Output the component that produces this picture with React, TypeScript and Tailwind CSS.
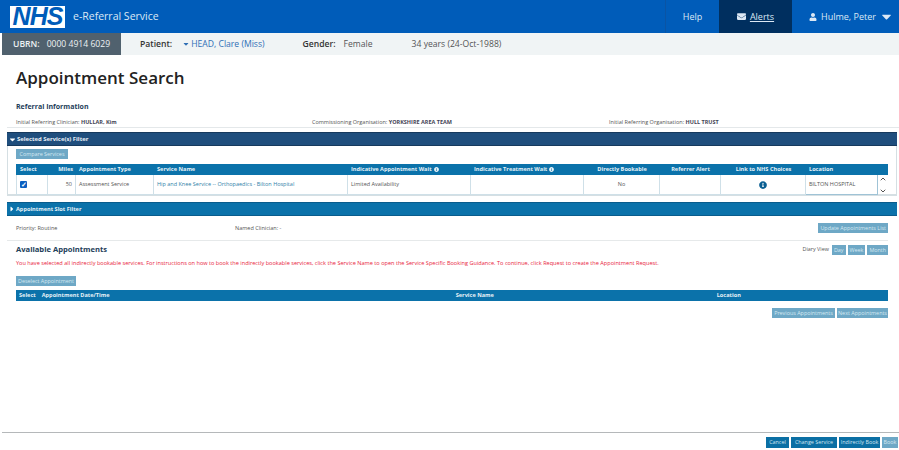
import React from 'react';
import { ChevronDown, ChevronUp } from 'lucide-react';
import { FaCaretDown, FaCaretRight, FaEnvelope, FaInfoCircle, FaUser } from 'react-icons/fa';

function Btn({ children, dark, tall, width = '' }: { children: React.ReactNode; dark?: boolean; tall?: boolean; width?: string }) {
  return (
    <button className={`block text-center text-[5.4px] whitespace-nowrap ${width || 'px-[2px]'} ${tall ? 'h-[11px] leading-[11px]' : 'h-[10px] leading-[10px]'} ${dark ? 'bg-[#0b6fa4] text-[#cfe5f1]' : 'bg-[#6ea8c6] text-[#d5e8f2]'}`}>
      {children}
    </button>
  );
}

const cols = 'grid-cols-[32px_28px_78px_194px_123px_113px_76px_61px_85px_82px]';

export default function App() {
  return (
    <div className="flex h-[450px] w-[899px] flex-col overflow-hidden bg-white font-['Open_Sans','Liberation_Sans',sans-serif] text-[#555]">
      {/* Header */}
      <div className="flex h-[33px] shrink-0 bg-[#005cb9] text-[#dce8f5]">
        <div className="flex items-center pl-[10px]">
          <div className="flex h-[22px] w-[55px] items-center justify-center bg-white">
            <span className="font-['Liberation_Sans',sans-serif] text-[25px] leading-none font-bold tracking-[-1px] text-[#005cb9] italic">NHS</span>
          </div>
          <span className="ml-[8px] text-[10.5px] font-medium">e-Referral Service</span>
        </div>
        <div className="ml-auto flex text-[9px]">
          <div className="flex w-[54px] items-center justify-center border-l border-[#0a54a4] font-medium">Help</div>
          <div className="flex w-[73px] items-center justify-center gap-[4px] bg-[#002f5f]">
            <FaEnvelope className="size-[9px]" />
            <span className="underline">Alerts</span>
          </div>
          <div className="flex w-[107px] items-center pl-[17px]">
            <FaUser className="size-[8px]" />
            <span className="ml-[4px]">Hulme, Peter</span>
            <FaCaretDown className="ml-[3px] size-[15px]" />
          </div>
        </div>
      </div>

      {/* Patient bar */}
      <div className="ml-[2px] flex h-[22px] shrink-0 items-center bg-[#f0f4f5] text-[8.6px]">
        <div className="flex h-full w-[119px] items-center gap-[7px] bg-[#50616e] pl-[11px] text-[#eef2f4]">
          <span className="font-semibold">UBRN:</span>
          <span>0000 4914 6029</span>
        </div>
        <span className="ml-[19px] font-semibold text-[#333]">Patient:</span>
        <FaCaretDown className="ml-[10px] size-[8px] text-[#2f6fb5]" />
        <span className="ml-[1px] text-[#2f6fb5]">HEAD, Clare (Miss)</span>
        <span className="ml-[38px] font-semibold text-[#333]">Gender:</span>
        <span className="ml-[8px]">Female</span>
        <span className="ml-[39px]">34 years (24-Oct-1988)</span>
      </div>

      {/* Title */}
      <h1 className="mt-[11px] ml-[16px] text-[17px] leading-[24px] font-semibold text-[#222]">Appointment Search</h1>

      <div className="mt-[12px] ml-[16px] text-[7px] leading-[9px] font-bold text-[#24405a]">Referral Information</div>

      <div className="mt-[6px] ml-[7px] flex h-[11px] border-b border-[#e4e8ea] text-[5.5px] leading-[10px]">
        <div className="w-[305px] pl-[9px]">Initial Referring Clinician: <b className="text-[#445]">HULLAR, Kim</b></div>
        <div className="w-[297px]">Commissioning Organisation: <b className="text-[#445]">YORKSHIRE AREA TEAM</b></div>
        <div>Initial Referring Organisation: <b className="text-[#445]">HULL TRUST</b></div>
      </div>

      {/* Selected services */}
      <div className="mt-[4px] ml-[7px] w-[890px] border-x border-b-2 border-[#d5dfe3]">
        <div className="-mx-px flex h-[14px] items-center border-y border-[#16395d] bg-[#1f4e7d] text-[5.9px] font-bold text-[#e8eff5]">
          <FaCaretDown className="ml-[1px] size-[9px] text-white" />
          <span>Selected Service(s) Filter</span>
        </div>
        <div className="px-[8px] pt-[3px] pb-[6px]">
          <Btn width="w-[52px]">Compare Services</Btn>
          <div className="mt-[5px] w-[872px]">
            <div className={`grid h-[11px] ${cols} items-center bg-[#0b72aa] text-[5.6px] font-bold text-[#e6f1f7]`}>
              <div className="pl-[4px]">Select</div>
              <div className="pr-[3px] text-right">Miles</div>
              <div className="pl-[3px]">Appointment Type</div>
              <div className="pl-[3px]">Service Name</div>
              <div className="flex items-center gap-[2px] pl-[3px]">Indicative Appointment Wait <FaInfoCircle className="size-[5px]" /></div>
              <div className="flex items-center gap-[2px] pl-[3px]">Indicative Treatment Wait <FaInfoCircle className="size-[5px]" /></div>
              <div className="text-center">Directly Bookable</div>
              <div className="text-center">Referrer Alert</div>
              <div className="text-center">Link to NHS Choices</div>
              <div className="pl-[3px]">Location</div>
            </div>
            <div className={`grid h-[13px] ${cols} text-[5.5px]`}>
              <div className="flex items-center border-x border-b border-[#cfe0e8] pl-[3px]">
                <span className="flex size-[7px] items-center justify-center rounded-[1px] bg-[#0b5fc0] text-[7px] leading-none font-bold text-white">✓</span>
              </div>
              <div className="flex items-center justify-end border-r border-b border-[#cfe0e8] pr-[3px]">50</div>
              <div className="flex items-center border-r border-b border-[#cfe0e8] pl-[3px]">Assessment Service</div>
              <div className="flex items-center border-r border-b border-[#cfe0e8] pl-[3px] text-[#2f7fa8]">Hip and Knee Service -- Orthopaedics - Bilton Hospital</div>
              <div className="flex items-center border-r border-b border-[#cfe0e8] pl-[3px]">Limited Availability</div>
              <div className="border-r border-b border-[#cfe0e8]" />
              <div className="flex items-center justify-center border-r border-b border-[#cfe0e8]">No</div>
              <div className="border-r border-b border-[#cfe0e8]" />
              <div className="flex items-center justify-center border-r border-b border-[#cfe0e8]">
                <FaInfoCircle className="size-[8px] text-[#0b5f92]" />
              </div>
              <div className="flex">
                <div className="flex w-[72px] items-center border-r border-b border-[#9fc3d6] pl-[3px]">BILTON HOSPITAL</div>
                <div className="flex h-[20px] w-[10px] flex-col items-center justify-between text-[#555]">
                  <ChevronUp className="size-[8px]" strokeWidth={3} />
                  <ChevronDown className="size-[8px]" strokeWidth={3} />
                </div>
              </div>
            </div>
          </div>
        </div>
      </div>

      {/* Slot filter */}
      <div className="mt-[6px] ml-[7px] flex h-[14px] w-[890px] items-center border-y border-[#095c8c] bg-[#0b72aa] text-[5.6px] font-bold text-[#e6f1f7]">
        <FaCaretRight className="ml-[1px] size-[8px] text-white" />
        <span>Appointment Slot Filter</span>
      </div>
      <div className="mt-[7px] ml-[7px] flex h-[10px] w-[881px] items-center pl-[9px] text-[5.5px]">
        <span className="w-[219px]">Priority: Routine</span>
        <span>Named Clinician: -</span>
        <div className="ml-auto"><Btn>Update Appointments List</Btn></div>
      </div>

      {/* Available appointments */}
      <div className="mt-[7px] ml-[7px] w-[881px] border-t border-[#e6e9ea] pl-[9px]">
        <div className="flex h-[17px] items-center">
          <span className="text-[7.6px] font-bold text-[#24405a]">Available Appointments</span>
          <div className="ml-auto flex items-center gap-[2px]">
            <span className="mr-[1px] text-[5.4px]">Diary View</span>
            <Btn>Day</Btn>
            <Btn>Week</Btn>
            <Btn>Month</Btn>
          </div>
        </div>
        <div className="mt-[1px] text-[5.58px] leading-[8px] whitespace-nowrap text-[#e8233c]">
          You have selected all indirectly bookable services. For instructions on how to book the indirectly bookable services, click the Service Name to open the Service Specific Booking Guidance. To continue, click Request to create the Appointment Request.
        </div>
        <div className="mt-[9px]"><Btn width="w-[60px]">Deselect Appointment</Btn></div>
        <div className="mt-[4px] flex h-[11px] items-center bg-[#0b72aa] text-[5.6px] font-bold text-[#e6f1f7]">
          <span className="ml-[3px]">Select</span>
          <span className="ml-[6px] w-[414px]">Appointment Date/Time</span>
          <span className="w-[261px]">Service Name</span>
          <span>Location</span>
        </div>
        <div className="mt-[7px] flex justify-end gap-[2px]">
          <Btn width="w-[63px]">Previous Appointments</Btn>
          <Btn width="w-[51px]">Next Appointments</Btn>
        </div>
      </div>

      {/* Footer */}
      <div className="mt-auto mb-[2px] ml-[2px] flex justify-end gap-[2px] border-t border-[#b5b8ba] pt-[4px] pr-[1px]">
        <Btn dark tall width="w-[23px]">Cancel</Btn>
        <Btn dark tall width="w-[46px]">Change Service</Btn>
        <Btn dark tall width="w-[41px]">Indirectly Book</Btn>
        <Btn tall width="w-[16px]">Book</Btn>
      </div>
    </div>
  );
}
